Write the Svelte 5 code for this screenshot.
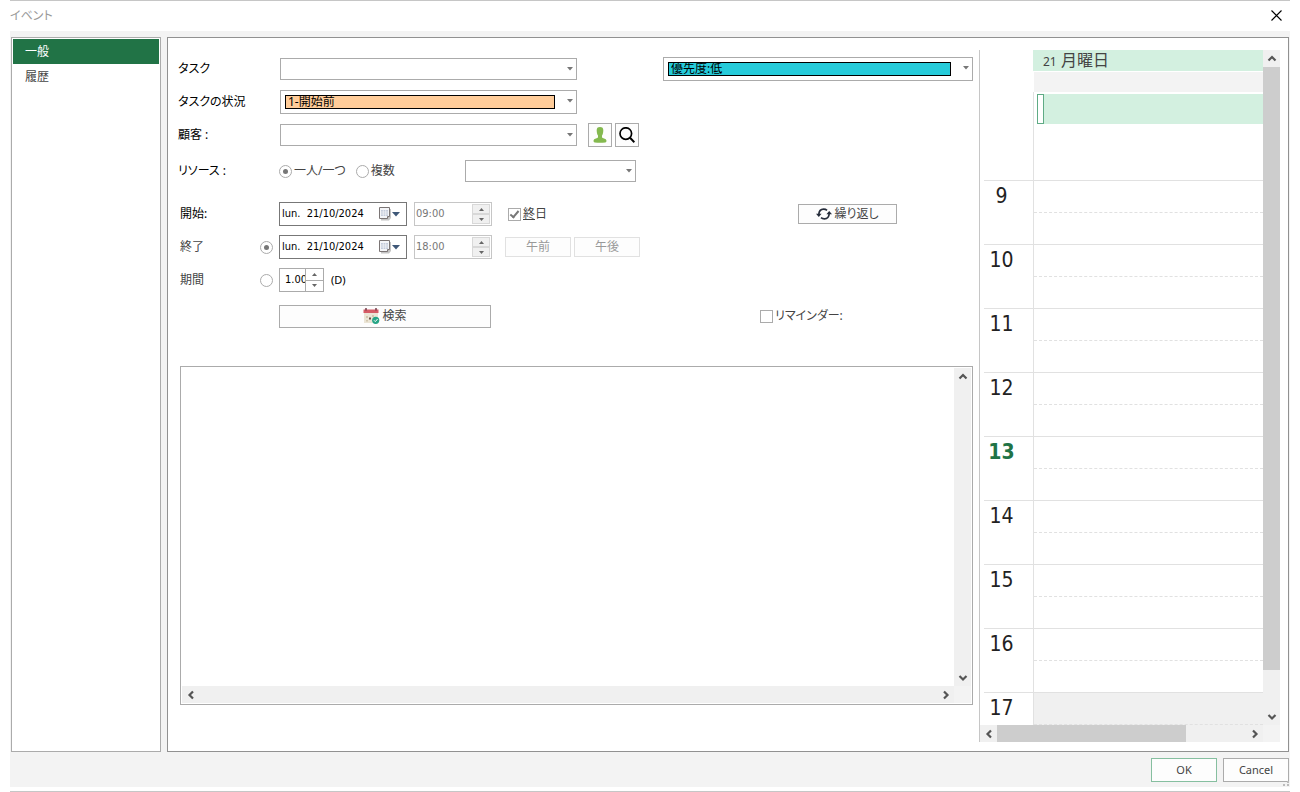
<script lang="ts">
  let task = $state("");
  let customer = $state("");
  let resource = $state("");
  let status = $state("1-開始前");
  let priority = $state("優先度:低");
  let mode = $state("one");
  let endMode = $state("end");
  let allDay = $state(true);
  let reminder = $state(false);
  let notes = $state("");
  let startDate = $state("lun.  21/10/2024");
  let endDate = $state("lun.  21/10/2024");
  let duration = $state("1.00");
  let tab = $state(0);

  const tabs = ["一般", "履歴"];
  const hours = [9, 10, 11, 12, 13, 14, 15, 16, 17];
  const currentHour = 13;

  const chevrons: Record<string, string> = {
    up: "M1.5 6.5 L5 3 L8.5 6.5",
    down: "M1.5 3 L5 6.5 L8.5 3",
    left: "M7 1.5 L3.5 5 L7 8.5",
    right: "M3 1.5 L6.5 5 L3 8.5",
  };

  function stepDuration(delta: number) {
    duration = Math.max(0, parseFloat(duration) + delta).toFixed(2);
  }
</script>

{#snippet scrollBtn(dir: string)}
  <button class="scroll-btn" aria-label={dir}>
    <svg width="10" height="10" viewBox="0 0 10 10">
      <path d={chevrons[dir]} fill="none" stroke="#555" stroke-width="2.2" />
    </svg>
  </button>
{/snippet}

{#snippet arrow()}
  <svg class="arrow" width="6" height="4" viewBox="0 0 6 4"><path d="M0 0H6L3 3.6Z" fill="#777" /></svg>
{/snippet}

{#snippet dateIcon()}
  <button class="date-btn" aria-label="カレンダー">
    <svg width="22" height="14" viewBox="0 0 22 14">
      <path d="M2 2H12V11L10 13.5H2Z" fill="#c4c4c4" />
      <path d="M0.5 0.5H10.5V9.5L8.5 11.5H0.5Z" fill="#f4f5f8" stroke="#7b7575" />
      <path d="M2 3H9V9H2Z" fill="#c3cbdb" />
      <path d="M2 5H9M2 7H9M4.3 3V9M6.7 3V9" stroke="#f4f5f8" stroke-width="0.7" />
      <path d="M10.5 9.5H8.5V11.5" fill="#fff" stroke="#7b7575" />
      <path d="M13 5H21L17 9.4Z" fill="#3f5878" />
    </svg>
  </button>
{/snippet}

{#snippet spin(disabled: boolean, onstep: (d: number) => void)}
  <span class="spin">
    <button aria-label="増やす" {disabled} onclick={() => onstep(1)}>
      <svg width="5" height="3" viewBox="0 0 5 3"><path d="M0 3H5L2.5 0Z" fill="#666" /></svg>
    </button>
    <button aria-label="減らす" {disabled} onclick={() => onstep(-1)}>
      <svg width="5" height="3" viewBox="0 0 5 3"><path d="M0 0H5L2.5 3Z" fill="#666" /></svg>
    </button>
  </span>
{/snippet}

<div class="window">
  <header class="titlebar">
    <span>イベント</span>
    <button class="close" aria-label="閉じる">
      <svg width="11" height="11" viewBox="0 0 11 11"><path d="M0.5 0.5L10.5 10.5M10.5 0.5L0.5 10.5" stroke="#000" stroke-width="1.1" /></svg>
    </button>
  </header>

  <div class="body">
    <nav class="sidebar">
      {#each tabs as name, i}
        <button class="tab" class:active={tab === i} onclick={() => (tab = i)}>{name}</button>
      {/each}
    </nav>

    <main class="panel">
      <form class="form" onsubmit={(e) => e.preventDefault()}>
        <div class="row">
          <label for="task">タスク</label>
          <div class="fields">
            <span class="combo wide">
              <select id="task" bind:value={task}><option value=""></option></select>
              {@render arrow()}
            </span>
          </div>
          <span class="combo colored priority">
            <select aria-label="優先度" bind:value={priority}><option>優先度:低</option></select>
            {@render arrow()}
          </span>
        </div>

        <div class="row near">
          <label for="status">タスクの状況</label>
          <div class="fields">
            <span class="combo colored wide">
              <select id="status" bind:value={status}><option>1-開始前</option></select>
              {@render arrow()}
            </span>
          </div>
        </div>

        <div class="row near">
          <label for="customer">顧客 :</label>
          <div class="fields">
            <span class="combo wide">
              <select id="customer" bind:value={customer}><option value=""></option></select>
              {@render arrow()}
            </span>
            <button class="btn icon-btn first" aria-label="顧客">
              <svg width="14" height="16" viewBox="0 0 14 16">
                <path d="M7 0C4.6 0 3.6 1.2 3.7 3.4C3.8 5.8 4.2 7.4 5 8.4V10.4C3.2 11.4 1 11.6 0.6 13.2C0.4 14.6 0.8 15.2 1.8 15.4C5 16 9 16 12.2 15.4C13.2 15.2 13.6 14.6 13.4 13.2C13 11.6 10.8 11.4 9 10.4V8.4C9.8 7.4 10.2 5.8 10.3 3.4C10.4 1.2 9.4 0 7 0Z" fill="#84b94f" />
              </svg>
            </button>
            <button class="btn icon-btn" aria-label="検索">
              <svg width="16" height="16" viewBox="0 0 16 16">
                <circle cx="6.8" cy="6.6" r="5.8" fill="none" stroke="#000" stroke-width="1.7" />
                <path d="M11 10.8L15.4 15.2" stroke="#000" stroke-width="2" />
              </svg>
            </button>
          </div>
        </div>

        <div class="row mid">
          <span class="label">リソース :</span>
          <div class="fields">
            <label class="choice"><input type="radio" value="one" bind:group={mode} />一人/一つ</label>
            <label class="choice second"><input type="radio" value="many" bind:group={mode} />複数</label>
            <span class="combo resource">
              <select aria-label="リソース" bind:value={resource}><option value=""></option></select>
              {@render arrow()}
            </span>
          </div>
        </div>

        <div class="row far">
          <label for="start" class="inset">開始:</label>
          <div class="fields">
            <span class="box date"><input id="start" type="text" bind:value={startDate} />{@render dateIcon()}</span>
            <span class="box time"><input type="text" aria-label="開始時刻" value="09:00" disabled />{@render spin(true, () => {})}</span>
            <label class="choice all-day"><input type="checkbox" bind:checked={allDay} /><u>終</u>日</label>
          </div>
          <button class="btn repeat">
            <svg width="16" height="12" viewBox="0 0 16 12">
              <path d="M2.8 6.5C3 3 5.2 1.2 7.6 1.2C9 1.2 10 1.5 11 2.4" fill="none" stroke="#252c3a" stroke-width="1.7" />
              <path d="M13.2 5.5C13 9 10.8 10.8 8.4 10.8C7 10.8 6 10.5 5 9.6" fill="none" stroke="#252c3a" stroke-width="1.7" />
              <path d="M0 5.8H5.6L2.8 9Z M10.4 6.2H16L13.2 3Z" fill="#252c3a" />
            </svg>
            繰り返し
          </button>
        </div>

        <div class="row near">
          <span class="label inset dim">終了<input type="radio" aria-label="終了" value="end" bind:group={endMode} /></span>
          <div class="fields">
            <span class="box date"><input type="text" aria-label="終了日" bind:value={endDate} />{@render dateIcon()}</span>
            <span class="box time"><input type="text" aria-label="終了時刻" value="18:00" disabled />{@render spin(true, () => {})}</span>
            <button class="btn half first" disabled>午前</button>
            <button class="btn half" disabled>午後</button>
          </div>
        </div>

        <div class="row near">
          <span class="label inset dim">期間<input type="radio" aria-label="期間" value="duration" bind:group={endMode} /></span>
          <div class="fields">
            <span class="box duration"><input type="text" aria-label="期間" bind:value={duration} />{@render spin(false, stepDuration)}</span>
            <span class="unit">(D)</span>
          </div>
        </div>

        <div class="row mid">
          <span></span>
          <div class="fields">
            <button class="btn search">
              <svg width="17" height="16" viewBox="0 0 17 16">
                <path d="M1 4H15V15H1Z" fill="#ebe5d6" />
                <path d="M0.5 1.5H15.5V5H0.5Z" fill="#d55b66" />
                <path d="M3 0V2.5M13 0V2.5" stroke="#6b3440" stroke-width="1.4" />
                <path d="M3 8H5V10H3Z M9 7H11V9H9Z M3 12H5V13.5H3Z" fill="#d3c7ae" />
                <path d="M6 9.5H8V11.5H6Z" fill="#6a5144" />
                <circle cx="12.7" cy="12.3" r="3.6" fill="#26a586" />
                <path d="M11 12.3L12.3 13.6L14.6 11" fill="none" stroke="#fff" />
              </svg>
              検索
            </button>
          </div>
          <label class="choice reminder"><input type="checkbox" bind:checked={reminder} />リマインダー:</label>
        </div>

        <div class="notes">
          <textarea aria-label="メモ" bind:value={notes}></textarea>
          <div class="vbar">{@render scrollBtn("up")}{@render scrollBtn("down")}</div>
          <div class="hbar">{@render scrollBtn("left")}{@render scrollBtn("right")}</div>
          <div class="corner"></div>
        </div>
      </form>

      <section class="calendar">
        <div class="days">
          <div class="day-head"><small>21</small> 月曜日</div>
          <div class="strip"></div>
          <div class="all-day-cell"><div class="event"></div></div>
          {#each hours as hour}
            <div class="hour" class:now={hour === currentHour} class:closed={hour >= 17}>
              <span class="num">{hour}</span>
              <span class="slot"></span>
            </div>
          {/each}
        </div>
        <div class="vbar">
          {@render scrollBtn("up")}
          <div class="track"><div class="thumb"></div></div>
          {@render scrollBtn("down")}
        </div>
        <div class="hbar">
          {@render scrollBtn("left")}
          <div class="track"><div class="thumb"></div></div>
          {@render scrollBtn("right")}
        </div>
        <div class="corner"></div>
      </section>
    </main>
  </div>

  <footer class="actions">
    <button class="btn ok">OK</button>
    <button class="btn">Cancel</button>
    <svg class="grip" width="6" height="5" viewBox="0 0 6 5"><path d="M4 0H6V2H4Z M0 3H2V5H0Z M4 3H6V5H4Z" fill="#bbb" /></svg>
  </footer>
</div>

<style>
  :global(body) {
    background: #fff;
  }

  .window {
    box-sizing: border-box;
    min-height: 100vh;
    margin: 0 10px;
    border-top: 1px solid #c6c6c6;
    border-bottom: 1px solid #c6c6c6;
    padding-bottom: 4px;
    display: flex;
    flex-direction: column;
    font: 12px/16px "Noto Sans", "Noto Sans CJK JP", sans-serif;
    font-feature-settings: "palt";
    color: #000;
  }

  .window *, .window *::before {
    box-sizing: border-box;
  }

  button, input, select, textarea {
    font: inherit;
    font-feature-settings: inherit;
    color: inherit;
    margin: 0;
    padding: 0;
    border: 0;
    border-radius: 0;
    background: none;
    outline: none;
  }

  svg {
    display: block;
    flex: none;
  }

  .titlebar {
    height: 30px;
    display: flex;
    justify-content: space-between;
    align-items: center;
    color: #999;
  }

  .close {
    padding: 8px 8px 10px;
  }

  .body {
    flex: 1;
    display: flex;
    gap: 6px;
    padding: 6px 1px 0;
    background: #f3f3f3;
  }

  .sidebar {
    width: 150px;
    border: 1px solid #ababab;
    background: #fff;
    padding: 1px;
  }

  .tab {
    display: block;
    width: 100%;
    height: 25px;
    padding-left: 12px;
    text-align: left;
    color: #444;
  }

  .tab.active {
    background: #217346;
    color: #fff;
  }

  .panel {
    flex: 1;
    display: flex;
    border: 1px solid #919191;
    background: #fff;
    padding: 12px 8px 9px 0;
  }

  /* form */
  .form {
    flex: 1;
    display: flex;
    flex-direction: column;
    padding: 7px 6px 37px 10px;
  }

  .row {
    display: grid;
    grid-template-columns: 101px 384px 1fr;
    align-items: center;
    height: 24px;
  }

  .near {
    margin-top: 9px;
  }

  .mid {
    margin-top: 12px;
  }

  .far {
    margin-top: 19px;
  }

  .label {
    display: flex;
    justify-content: space-between;
    align-items: center;
    padding-right: 6px;
  }

  .inset {
    padding-left: 2px;
  }

  .dim {
    color: #444;
  }

  .fields {
    display: flex;
    align-items: center;
  }

  .combo {
    position: relative;
    display: flex;
    height: 22px;
    border: 1px solid #ababab;
  }

  .combo select {
    flex: 1;
    width: 100%;
    appearance: none;
    padding: 0 16px 0 2px;
  }

  .arrow {
    position: absolute;
    right: 3px;
    top: 8px;
    pointer-events: none;
  }

  .wide {
    width: 297px;
    margin-left: 1px;
  }

  .resource {
    width: 171px;
    margin-left: auto;
    margin-right: 27px;
  }

  .colored {
    height: 24px;
    padding: 4px 21px 4px 4px;
  }

  .colored select {
    border: 1px solid #000;
    background: #ffcc99;
    line-height: 12px;
  }

  .priority select {
    background: #26cbda;
  }

  .btn {
    display: inline-flex;
    align-items: center;
    justify-content: center;
    gap: 2px;
    border: 1px solid #ababab;
    background: #fdfdfd;
    color: #444;
  }

  .icon-btn {
    width: 24px;
    height: 24px;
    margin-left: 3px;
  }

  .icon-btn.first {
    margin-left: 11px;
  }

  .choice {
    display: flex;
    align-items: center;
    color: #444;
  }

  .second {
    margin-left: 10px;
  }

  input[type="radio"], input[type="checkbox"] {
    appearance: none;
    width: 13px;
    height: 13px;
    border: 1px solid #ababab;
    background: #fff;
    margin-right: 2px;
    display: grid;
    place-items: center;
  }

  input[type="radio"] {
    border-radius: 50%;
  }

  .label input[type="radio"] {
    margin-right: 0;
  }

  input[type="radio"]:checked::before {
    content: "";
    width: 5px;
    height: 5px;
    border-radius: 50%;
    background: #777;
  }

  input[type="checkbox"]:checked::before {
    content: "";
    width: 5px;
    height: 9px;
    border: solid #777;
    border-width: 0 2px 2px 0;
    transform: translateY(-1px) rotate(40deg);
  }

  .box {
    display: flex;
    align-items: center;
    height: 24px;
    border: 1px solid #ababab;
    font-family: "DejaVu Sans Condensed", "Noto Sans", sans-serif;
    font-size: 11px;
  }

  .box input {
    flex: 1;
    min-width: 0;
    padding-left: 2px;
    white-space: pre;
  }

  .date {
    width: 128px;
    border-color: #777;
  }

  .date-btn {
    margin-right: 5px;
  }

  .time {
    width: 78px;
    margin-left: 7px;
    border-color: #c6c6c6;
    color: #777;
  }

  .time input {
    padding-left: 1px;
  }

  .spin {
    display: flex;
    flex-direction: column;
    width: 18px;
    height: 20px;
    margin-right: 1px;
  }

  .spin button {
    flex: 1;
    display: grid;
    place-items: center;
    border: 1px solid #d8d8d8;
    background: #f0f0f0;
  }

  .duration {
    width: 45px;
  }

  .duration input {
    padding-left: 5px;
  }

  .duration .spin {
    height: 22px;
    margin-right: 0;
  }

  .duration .spin button {
    background: #fff;
    border-color: #ababab;
    border-width: 0 0 0 1px;
  }

  .duration .spin button:first-child {
    border-bottom-width: 1px;
  }

  .unit {
    margin-left: 7px;
    font-size: 11px;
  }

  .all-day {
    margin-left: 16px;
  }

  .half {
    width: 66px;
    height: 20px;
    margin-left: 3px;
    border-color: #e1e1e1;
    color: #999;
  }

  .half.first {
    margin-left: 13px;
  }

  .repeat {
    width: 99px;
    height: 20px;
    margin-left: 135px;
  }

  .search {
    width: 212px;
    height: 23px;
  }

  .reminder {
    margin-left: 97px;
  }

  .notes {
    flex: 1;
    min-height: 200px;
    display: grid;
    grid-template-columns: 1fr 17px;
    grid-template-rows: 1fr 17px;
    margin: 38px 0 0 2px;
    border: 1px solid #ababab;
    padding: 1px;
  }

  textarea {
    resize: none;
    overflow: hidden;
    width: 100%;
    height: 100%;
    padding: 2px;
  }

  /* scroll bars */
  .vbar, .hbar {
    display: flex;
    justify-content: space-between;
    background: #f0f0f0;
  }

  .vbar {
    flex-direction: column;
  }

  .scroll-btn {
    width: 17px;
    height: 17px;
    display: grid;
    place-items: center;
    flex: none;
  }

  .track {
    flex: 1;
  }

  .thumb {
    background: #cdcdcd;
  }

  .vbar .thumb {
    height: 94%;
  }

  .hbar .thumb {
    width: 76%;
    height: 100%;
  }

  .corner {
    background: #f3f3f3;
  }

  /* calendar */
  .calendar {
    width: 301px;
    flex: none;
    display: grid;
    grid-template-columns: 1fr 17px;
    grid-template-rows: 1fr 17px;
    border-left: 1px solid #c6c6c6;
  }

  .day-head {
    height: 21px;
    margin-left: 53px;
    padding-left: 10px;
    background: #d3f0e0;
    color: #444;
    font-size: 16px;
    line-height: 21px;
  }

  .day-head small {
    font-size: 12px;
  }

  .strip {
    height: 20px;
    margin: 1px 0 0 54px;
    background: #f3f3f3;
  }

  .all-day-cell {
    height: 88px;
    margin-left: 53px;
    border-left: 1px solid #e1e1e1;
    padding: 2px 0 0 3px;
  }

  .event {
    height: 30px;
    background: #d3f0e0;
  }

  .event::before {
    content: "";
    display: block;
    width: 7px;
    height: 30px;
    border: 1px solid #5fab85;
    background: #fff;
  }

  .hour {
    display: flex;
    height: 64px;
    margin-left: 4px;
    border-top: 1px solid #e1e1e1;
  }

  .num {
    width: 49px;
    padding-left: 5px;
    padding-right: 19px;
    display: flex;
    justify-content: center;
    font-family: "DejaVu Sans Condensed", "Noto Sans", sans-serif;
    font-size: 21px;
    line-height: 30px;
    color: #222;
  }

  .now .num {
    color: #217346;
    font-weight: bold;
  }

  .slot {
    flex: 1;
    border-left: 1px solid #e1e1e1;
  }

  .slot::before {
    content: "";
    display: block;
    height: 32px;
    border-bottom: 1px dashed #e1e1e1;
  }

  .closed {
    height: 33px;
  }

  .closed .slot {
    background: #f0f0f0;
  }

  .actions {
    position: relative;
    height: 35px;
    display: flex;
    justify-content: flex-end;
    align-items: center;
    gap: 6px;
    padding: 0 1px 0 0;
    background: #f3f3f3;
    font-size: 11px;
  }

  .actions .btn {
    width: 66px;
    height: 24px;
  }

  .actions .ok {
    border-color: #86bfa0;
  }

  .grip {
    position: absolute;
    right: 1px;
    bottom: 1px;
  }
</style>
